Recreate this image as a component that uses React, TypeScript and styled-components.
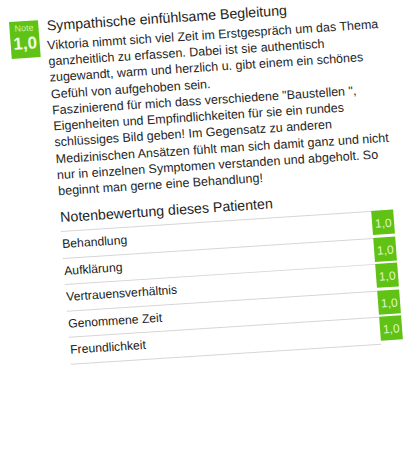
import React from "react";
import styled, { createGlobalStyle } from "styled-components";

const GREEN = "#5fc215";

const GlobalStyle = createGlobalStyle`
  html, body {
    margin: 0;
    padding: 0;
    background: #ffffff;
  }
  body {
    font-family: "Liberation Sans", Arial, Helvetica, sans-serif;
    color: #242424;
  }
`;

type Rating = {
    label: string;
    grade: string;
};

const ratings: Rating[] = [
    { label: "Behandlung", grade: "1,0" },
    { label: "Aufklärung", grade: "1,0" },
    { label: "Vertrauensverhältnis", grade: "1,0" },
    { label: "Genommene Zeit", grade: "1,0" },
    { label: "Freundlichkeit", grade: "1,0" },
];

const App = () => {
    return (
        <>
            <GlobalStyle />
            <Page>
                <ReviewCard>
                    <GradeBadge>
                        <BadgeCaption>Note</BadgeCaption>
                        <BadgeGrade>1,0</BadgeGrade>
                    </GradeBadge>
                    <Content>
                        <Title>Sympathische einfühlsame Begleitung</Title>
                        <ReviewText>
                            Viktoria nimmt sich viel Zeit im Erstgespräch um das Thema ganzheitlich zu erfassen.
                            Dabei ist sie authentisch zugewandt, warm und herzlich u. gibt einem ein schönes
                            Gefühl von aufgehoben sein.
                            <br />
                            Faszinierend für mich dass verschiedene "Baustellen ", Eigenheiten und
                            Empfindlichkeiten für sie ein rundes schlüssiges Bild geben! Im Gegensatz zu
                            anderen Medizinischen Ansätzen fühlt man sich damit ganz und nicht nur in
                            einzelnen Symptomen verstanden und abgeholt. So beginnt man gerne eine Behandlung!
                        </ReviewText>
                        <RatingTable>
                            <TableHeading>Notenbewertung dieses Patienten</TableHeading>
                            {ratings.map((rating) => (
                                <RatingRow key={rating.label}>
                                    <RatingLabel>{rating.label}</RatingLabel>
                                    <RatingGrade>{rating.grade}</RatingGrade>
                                </RatingRow>
                            ))}
                        </RatingTable>
                    </Content>
                </ReviewCard>
            </Page>
        </>
    );
};

const Page = styled('div')`
  padding: 21.5px 0 0 9.3px;
  height: 460px;
  box-sizing: border-box;
  overflow: hidden;
`

// the reference is a photo of a screen, held at a slight tilt
const ReviewCard = styled('div')`
  display: flex;
  align-items: flex-start;
  gap: 7.4px;
  transform: rotate(-3.7deg) skewX(0.6deg);
  transform-origin: 0 0;
`

const GradeBadge = styled('div')`
  flex: none;
  width: 29px;
  height: 37px;
  background: ${GREEN};
  display: flex;
  flex-direction: column;
  align-items: center;
  padding-top: 2px;
  box-sizing: border-box;
`

const BadgeCaption = styled('span')`
  font-size: 9px;
  line-height: 10px;
  color: #c9f2a4;
`

const BadgeGrade = styled('span')`
  font-size: 17px;
  line-height: 17px;
  margin-top: 2px;
  font-weight: bold;
  color: #effde2;
`

const Content = styled('div')`
  flex: none;
  width: 336px;
`

const Title = styled('h2')`
  margin: -1.9px 0 0;
  padding-left: 1px;
  font-size: 14.2px;
  line-height: 16px;
  font-weight: normal;
  color: #1e1e1e;
`

const ReviewText = styled('p')`
  margin: 3.6px 0 0;
  font-size: 12.5px;
  line-height: 16.3px;
  color: #262626;
`

const RatingTable = styled('div')`
  width: 333px;
  margin-top: 8.6px;
`

const TableHeading = styled('div')`
  font-size: 14.2px;
  line-height: 18px;
  padding-bottom: 5px;
  border-bottom: 1px solid #d6d6d6;
  color: #1e1e1e;
`

const RatingRow = styled('div')`
  display: flex;
  align-items: flex-start;
`

const RatingLabel = styled('div')`
  flex: 1;
  font-size: 12.2px;
  line-height: 15px;
  padding: 4.8px 0 5.7px;
  border-bottom: 1px solid #d6d6d6;
  color: #222222;
`

const RatingGrade = styled('div')`
  flex: none;
  width: 22.5px;
  height: 24px;
  margin-top: -1px;
  background: ${GREEN};
  color: #def6c8;
  font-size: 12px;
  display: flex;
  align-items: center;
  justify-content: center;
  padding-top: 2px;
  box-sizing: border-box;
`

export default App;
